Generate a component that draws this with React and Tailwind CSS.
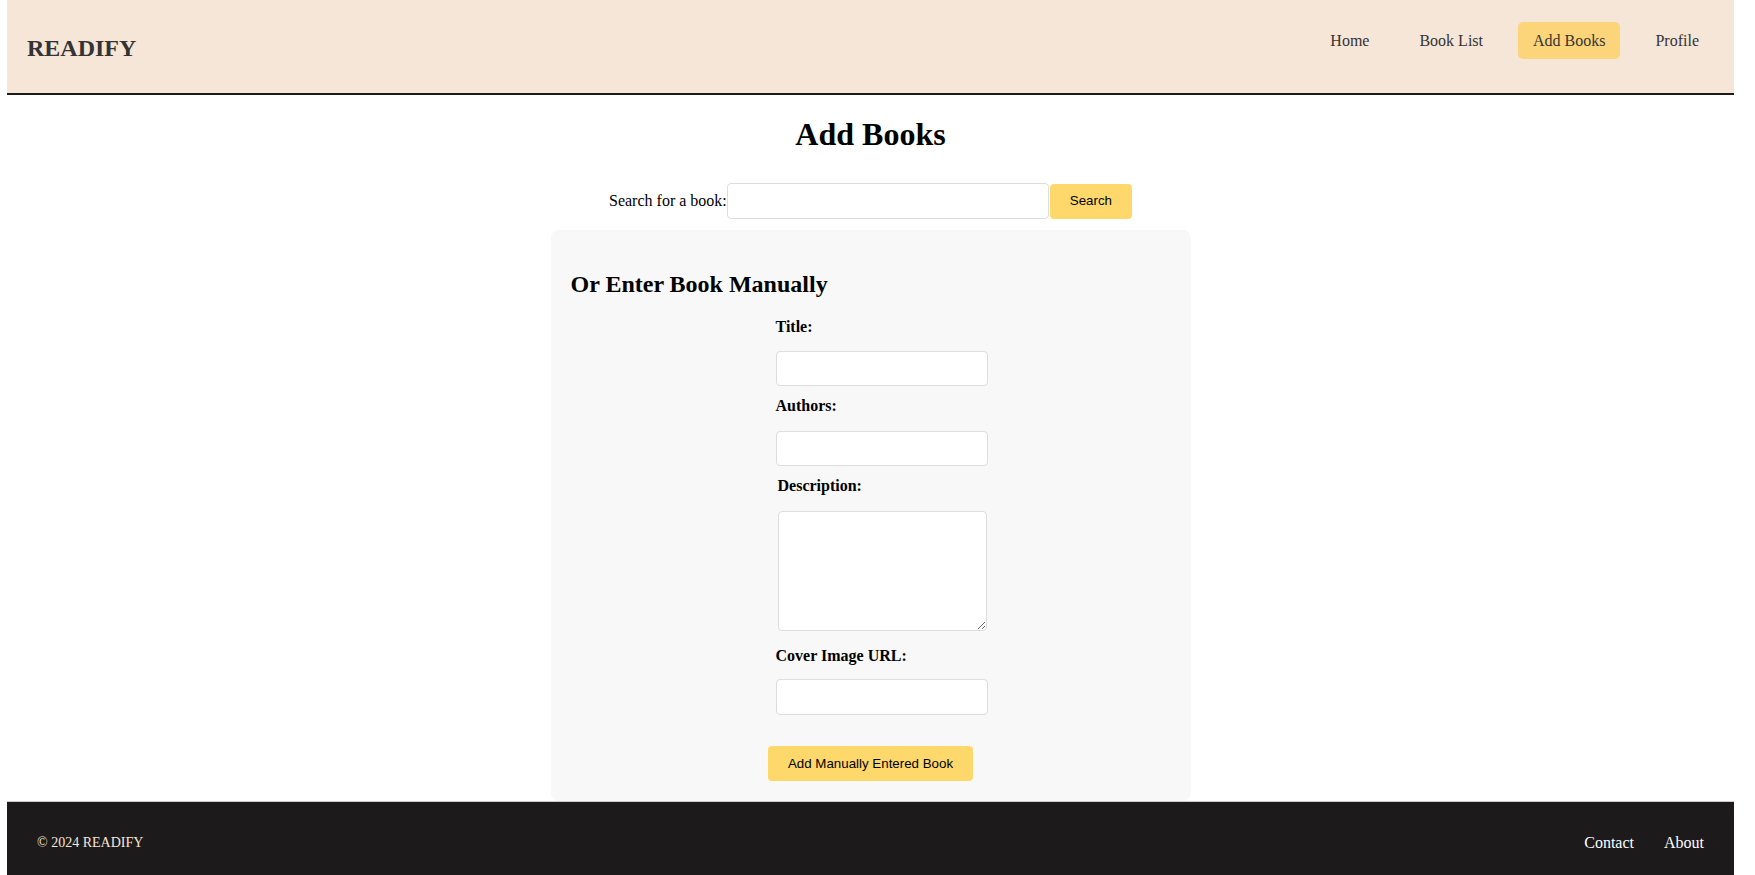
import React, { useState } from 'react';

const navLinks = ['Home', 'Book List', 'Add Books', 'Profile'];

const Field = ({ label, children, labelClass = '', className = '' }) => (
  <div className={className}>
    <label className={`block text-[16px] font-bold leading-[18px] ${labelClass}`}>{label}</label>
    {children}
  </div>
);

const App = () => {
  const [query, setQuery] = useState('');
  const [book, setBook] = useState({ title: '', authors: '', description: '', cover: '' });

  const update = (key) => (e) => setBook({ ...book, [key]: e.target.value });

  return (
    <div className="min-h-screen bg-white pl-[7px] pr-[21px] font-['Liberation_Serif','Times_New_Roman',serif] text-black">
      {/* Header */}
      <header className="h-[95px] bg-[#f6e6d8] border-b-2 border-[#1c1a1b] flex justify-between items-start px-[20px]">
        <div className="mt-[34px] text-[24px] leading-[28px] font-bold text-[#333333]">READIFY</div>
        <nav className="mt-[22px] flex gap-[20px]">
          {navLinks.map((link) => (
            <a
              key={link}
              href="#"
              className={`h-[37px] flex items-center px-[15px] rounded-[5px] text-[16px] text-[#333333] ${
                link === 'Add Books' ? 'bg-[#fcd57a]' : ''
              }`}
            >
              {link}
            </a>
          ))}
        </nav>
      </header>

      {/* Main */}
      <main className="flex flex-col items-center">
        <h1 className="mt-[21px] text-[32px] leading-[37px] font-bold">Add Books</h1>

        <div className="mt-[30px] flex items-center">
          <label className="text-[16px] leading-[18px]">Search for a book:</label>
          <input
            type="text"
            value={query}
            onChange={(e) => setQuery(e.target.value)}
            className="w-[322px] h-[36px] bg-white border border-[#dddddd] rounded-[4px] px-[10px] outline-none"
          />
          <button className="ml-[1px] h-[35px] px-[20px] bg-[#fed86b] rounded-[4px] text-[13.33px] font-['Liberation_Sans',Arial,sans-serif]">
            Search
          </button>
        </div>

        {/* Manual entry card */}
        <div className="mt-[11px] w-[640px] bg-[#f8f8f8] rounded-[8px] p-[20px]">
          <h2 className="mt-[20px] text-[24px] leading-[28px] font-bold">Or Enter Book Manually</h2>

          <div className="ml-[205px] w-[212px]">
            <Field label="Title:" className="mt-[20px]">
              <input
                type="text"
                value={book.title}
                onChange={update('title')}
                className="mt-[15px] block w-[212px] h-[35px] bg-white border border-[#dddddd] rounded-[4px] px-2 outline-none"
              />
            </Field>
            <Field label="Authors:" className="mt-[11px]">
              <input
                type="text"
                value={book.authors}
                onChange={update('authors')}
                className="mt-[16px] block w-[212px] h-[35px] bg-white border border-[#dddddd] rounded-[4px] px-2 outline-none"
              />
            </Field>
            <Field label="Description:" labelClass="ml-[2px]" className="mt-[11px]">
              <textarea
                value={book.description}
                onChange={update('description')}
                className="mt-[16px] ml-[2px] block w-[209px] h-[120px] bg-white border border-[#dddddd] rounded-[4px] px-2 outline-none"
              />
            </Field>
            <Field label="Cover Image URL:" className="mt-[16px]">
              <input
                type="text"
                value={book.cover}
                onChange={update('cover')}
                className="mt-[14px] block w-[212px] h-[36px] bg-white border border-[#dddddd] rounded-[4px] px-2 outline-none"
              />
            </Field>
          </div>

          <div className="mt-[31px] flex justify-center">
            <button className="h-[35px] px-[20px] bg-[#fed86b] rounded-[4px] text-[13.33px] font-['Liberation_Sans',Arial,sans-serif]">
              Add Manually Entered Book
            </button>
          </div>
        </div>
      </main>

      {/* Footer */}
      <footer className="border-t border-[#cccccc] bg-[#1c1a1b] flex justify-between items-center px-[30px] py-[32px]">
        <p className="text-[14px] leading-[18px] text-[#f6e6d8]">© 2024 READIFY</p>
        <div className="flex gap-[30px] text-[16px] leading-[18px] text-white">
          <a href="#">Contact</a>
          <a href="#">About</a>
        </div>
      </footer>
    </div>
  );
};

export default App;
